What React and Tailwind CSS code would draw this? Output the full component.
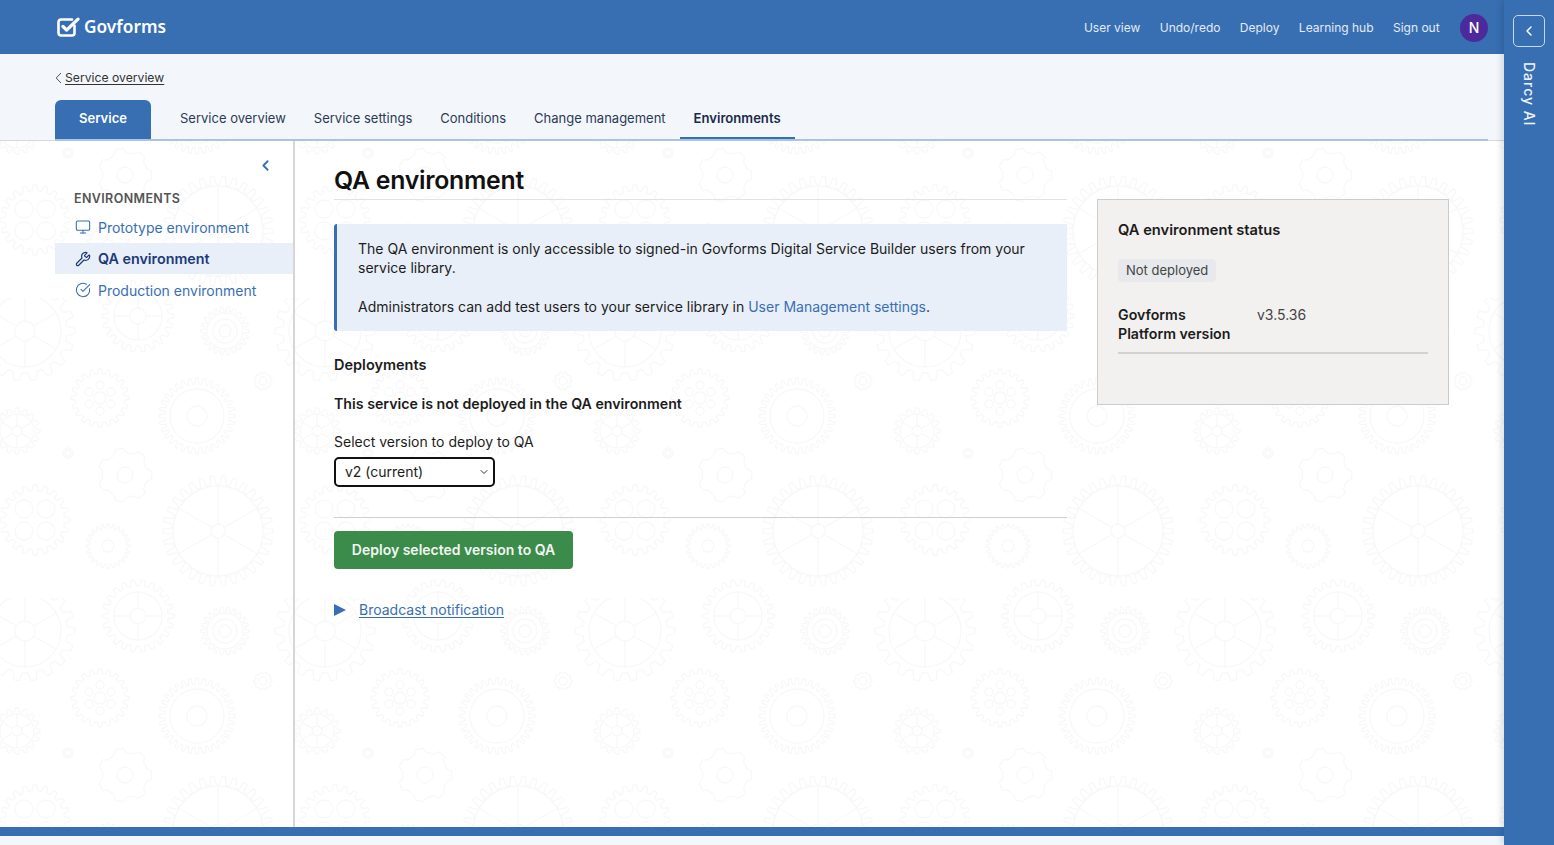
import React from 'react';
import { ChevronLeft, ChevronDown, Monitor, Wrench, CircleCheckBig } from 'lucide-react';

const TABS = ['Service overview', 'Service settings', 'Conditions', 'Change management', 'Environments'];
const TOP_LINKS = ['User view', 'Undo/redo', 'Deploy', 'Learning hub', 'Sign out'];

function gearPath(cx, cy, r, teeth) {
  const inner = r * 0.84;
  const step = (Math.PI * 2) / teeth;
  let d = '';
  for (let i = 0; i < teeth; i++) {
    const a = i * step;
    const pts = [
      [inner, a - step * 0.32],
      [r, a - step * 0.16],
      [r, a + step * 0.16],
      [inner, a + step * 0.32],
    ];
    pts.forEach(([rad, ang], j) => {
      const x = (cx + rad * Math.cos(ang)).toFixed(1);
      const y = (cy + rad * Math.sin(ang)).toFixed(1);
      d += `${i === 0 && j === 0 ? 'M' : 'L'}${x} ${y}`;
    });
  }
  return d + 'Z';
}

// x, y, outer radius, teeth, rings, spokes, holes
const GEARS = [
  [35, 222, 35, 20, [], 0, [[-11, -11, 9], [11, -11, 9], [-11, 11, 9], [11, 11, 9]]],
  [335, 222, 35, 20, [], 0, [[-11, -11, 9], [11, -11, 9], [-11, 11, 9], [11, 11, 9]]],
  [108, 248, 22, 24, [6], 0, []],
  [218, 233, 55, 30, [7, 45], 6, []],
  [125, 177, 27, 7, [8], 0, []],
  [25, 33, 50, 18, [10, 36], 6, []],
  [325, 33, 50, 18, [10, 36], 6, []],
  [138, 18, 36, 22, [8, 24], 4, []],
  [138, 318, 36, 22, [8, 24], 4, []],
  [225, 33, 24, 22, [6, 12, 18], 0, []],
  [225, 333, 24, 22, [6, 12, 18], 0, []],
  [100, 100, 29, 20, [6], 0, [[-11, -6, 4], [11, -6, 4], [-11, 6, 4], [11, 6, 4], [0, -13, 4], [0, 13, 4]]],
  [197, 118, 38, 32, [10, 27], 0, []],
  [263, 83, 9, 10, [4], 0, []],
  [68, 155, 8, 1, [5, 3], 0, []],
  [17, 133, 23, 16, [5, 17], 6, []],
  [317, 133, 23, 16, [5, 17], 6, []],
];

function GearTile() {
  return (
    <g fill="none" stroke="#f8f8f8" strokeWidth="1.3">
      {GEARS.map(([x, y, r, teeth, rings, spokes, holes], i) => (
        <g key={i}>
          {teeth > 1 && <path d={gearPath(x, y, r, teeth)} />}
          {rings.map(rr => <circle key={rr} cx={x} cy={y} r={rr} />)}
          {holes.map(([dx, dy, hr], j) => <circle key={j} cx={x + dx} cy={y + dy} r={hr} />)}
          {Array.from({ length: spokes }).map((_, j) => {
            const a = (j / spokes) * Math.PI * 2 + Math.PI / 2;
            const r0 = rings[0] || 0;
            const r1 = rings[1] || r * 0.8;
            return <line key={j} x1={x + r0 * Math.cos(a)} y1={y + r0 * Math.sin(a)} x2={x + r1 * Math.cos(a)} y2={y + r1 * Math.sin(a)} />;
          })}
        </g>
      ))}
    </g>
  );
}

function GearBackdrop() {
  return (
    <svg className="absolute inset-0 w-full h-full pointer-events-none" aria-hidden="true">
      <defs>
        <pattern id="gears" x="0" y="-143" width="300" height="300" patternUnits="userSpaceOnUse">
          <GearTile />
        </pattern>
      </defs>
      <rect width="100%" height="100%" fill="url(#gears)" />
    </svg>
  );
}

function Logo() {
  return (
    <svg width="23" height="21" viewBox="0 0 23 21" fill="none" className="shrink-0">
      <path d="M17.5 8.5V16a2.5 2.5 0 0 1-2.5 2.5H4A2.5 2.5 0 0 1 1.5 16V5A2.5 2.5 0 0 1 4 2.5h11" stroke="white" strokeWidth="2.6" strokeLinecap="round" />
      <path d="M6 9.5l3.6 3.6L21 2.2" stroke="white" strokeWidth="3.2" strokeLinecap="round" strokeLinejoin="round" />
    </svg>
  );
}

export default function App() {
  return (
    <div className="flex h-screen overflow-hidden bg-white text-[14px] text-[#1c1c1c]" style={{ fontFamily: 'Inter, "Liberation Sans", sans-serif' }}>
      <div className="flex-1 min-w-0 flex flex-col">
        {/* Top bar */}
        <header className="h-[54px] shrink-0 bg-[#386fb3] flex items-center pl-[57px] pr-[16px]">
          <Logo />
          <span className="ml-[4px] text-[17.3px] font-semibold text-white" style={{ fontFamily: '"Noto Sans", sans-serif' }}>Govforms</span>
          <nav className="ml-auto flex items-center gap-[19.4px] text-[12px] text-[#e3ebf5] pt-[1px]">
            {TOP_LINKS.map(l => <a key={l}>{l}</a>)}
            <span className="ml-[1px] w-[28px] h-[28px] rounded-full bg-[#4c2a9c] text-white text-[14px] font-medium flex items-center justify-center">N</span>
          </nav>
        </header>

        {/* Breadcrumb and tabs */}
        <div className="h-[87px] shrink-0 bg-[#f3f7fb] pt-[15px] border-b border-[#d5d8dc]">
          <div className="pl-[55px] flex items-center text-[12.2px] text-[#333] h-[18px]">
            <svg width="10" height="12" viewBox="0 0 10 12" fill="none" className="shrink-0">
              <path d="M6 1L1.2 6L6 11" stroke="#555" strokeWidth="1" />
            </svg>
            <a className="underline underline-offset-2">Service overview</a>
          </div>
          <div className="mt-[13px] ml-[55px] mr-[16px] h-[41px] flex items-stretch border-b-2 border-[#a9c5e4]">
            <div className="w-[96px] h-[39px] pb-[2px] rounded-t-[6px] bg-[#386fb3] text-white font-semibold text-[13px] flex items-center justify-center">Service</div>
            <div className="flex ml-[15px] gap-0">
              {TABS.map(t => (
                <div key={t} className={`px-[14px] h-[39px] flex items-center border-b-[2px] ${t === 'Environments' ? 'text-[13.1px] font-semibold text-[#1b2a4a] border-[#386fb3]' : 'text-[13px] text-[#2c3a55] border-transparent'}`}>{t}</div>
              ))}
            </div>
          </div>
        </div>

        {/* Body */}
        <div className="relative flex-1 min-h-0 flex">
          <GearBackdrop />
          <aside className="relative w-[295px] shrink-0 border-r-2 border-[#d6d6d6] pl-[55px]">
            <div className="h-[49px] flex items-center justify-end pr-[19px]">
              <ChevronLeft className="w-[17px] h-[17px] text-[#386fb3]" strokeWidth={2.6} />
            </div>
            <p className="pl-[19px] text-[12.5px] font-semibold tracking-[0.03em] text-[#555] leading-[18px]">ENVIRONMENTS</p>
            <div className="mt-[3px]">
              <a className="h-[32px] pl-[20px] flex items-center gap-[7px] text-[#386fb3]"><Monitor className="w-[16px] h-[16px]" strokeWidth={1.6} /><span>Prototype environment</span></a>
              <a className="h-[31px] pl-[20px] flex items-center gap-[7px] bg-[#e8eff8] text-[14.3px] font-semibold text-[#1c3a78]"><Wrench className="w-[16px] h-[16px]" strokeWidth={1.8} /><span>QA environment</span></a>
              <a className="h-[32px] pl-[20px] flex items-center gap-[7px] text-[#386fb3]"><CircleCheckBig className="w-[16px] h-[16px]" strokeWidth={1.6} /><span>Production environment</span></a>
            </div>
          </aside>

          <main className="relative flex-1 min-w-0 pl-[39px] flex items-start">
            <div className="w-[733px] shrink-0">
              <h1 className="pt-[24px] pb-[4px] h-[59px] text-[24.8px] leading-[30px] font-semibold tracking-[-0.01em] text-[#111] border-b border-[#e2e2e2]">QA environment</h1>
              <div className="mt-[24px] h-[107px] bg-[#e8eff8] border-l-[3px] border-[#386fb3] rounded-l-[3px] pl-[21px] pr-[30px] pt-[15px] leading-[19px]">
                <p>The QA environment is only accessible to signed-in Govforms Digital Service Builder users from your service library.</p>
                <p className="mt-[20px]">Administrators can add test users to your service library in <a className="text-[#386fb3]">User Management settings</a>.</p>
              </div>
              <h2 className="mt-[24px] text-[14.5px] font-semibold leading-[20px]">Deployments</h2>
              <p className="mt-[19px] text-[14.2px] font-semibold leading-[20px]">This service is not deployed in the QA environment</p>
              <label className="mt-[18px] block leading-[20px]">Select version to deploy to QA</label>
              <div className="mt-[5px] w-[161px] h-[30px] pb-[1px] rounded-[5px] border-2 border-[#111] bg-white flex items-center justify-between pl-[9px] pr-[3px]">
                <span>v2 (current)</span>
                <ChevronDown className="w-[12px] h-[12px]" strokeWidth={1.8} />
              </div>
              <div className="mt-[30px] border-t border-[#cfcfcf]" />
              <button className="mt-[13px] w-[239px] h-[38px] pb-[1px] rounded-[4px] bg-[#3b8c4a] text-[#f2f7f2] font-semibold text-[14px] flex items-center justify-center">Deploy selected version to QA</button>
              <div className="mt-[31px] flex items-center">
                <span className="w-0 h-0 border-y-[6.5px] border-y-transparent border-l-[12px] border-l-[#386fb3]" />
                <a className="ml-[13px] text-[#386fb3] underline underline-offset-2 leading-[20px]">Broadcast notification</a>
              </div>
            </div>

            <section className="ml-[30px] mt-[58px] w-[352px] h-[206px] bg-[#f2f1f0] border border-[#cccccc] pl-[20px] pr-[20px] pt-[20px]">
              <h3 className="text-[14.7px] font-semibold leading-[20px]">QA environment status</h3>
              <span className="mt-[19px] inline-block h-[23px] rounded-[4px] bg-[#e7e9ec] px-[8px] text-[13px] leading-[23px] text-[#444]">Not deployed</span>
              <div className="mt-[23px] flex pb-[9px] border-b-2 border-[#d2d2d2] leading-[19px]">
                <span className="w-[139px] text-[14.2px] font-semibold">Govforms<br />Platform version</span>
                <span className="text-[#444]">v3.5.36</span>
              </div>
            </section>
          </main>
        </div>

        {/* Footer strip */}
        <div className="h-[9px] shrink-0 bg-[#386fb3]" />
        <div className="h-[9px] shrink-0 bg-[#f3f7fb]" />
      </div>

      {/* Darcy AI rail */}
      <aside className="w-[50px] shrink-0 bg-[#386fb3] shadow-[-3px_0_6px_rgba(0,0,0,0.12)] z-10 flex flex-col items-center pt-[15px]">
        <button className="w-[32px] h-[32px] rounded-[5px] border border-[#c7d8ec] flex items-center justify-center text-white">
          <ChevronLeft className="w-[16px] h-[16px]" strokeWidth={2.2} />
        </button>
        <span className="mt-[15px] text-[14px] font-medium tracking-[0.07em] text-[#eef3fa] [writing-mode:vertical-rl]">Darcy AI</span>
      </aside>
    </div>
  );
}
